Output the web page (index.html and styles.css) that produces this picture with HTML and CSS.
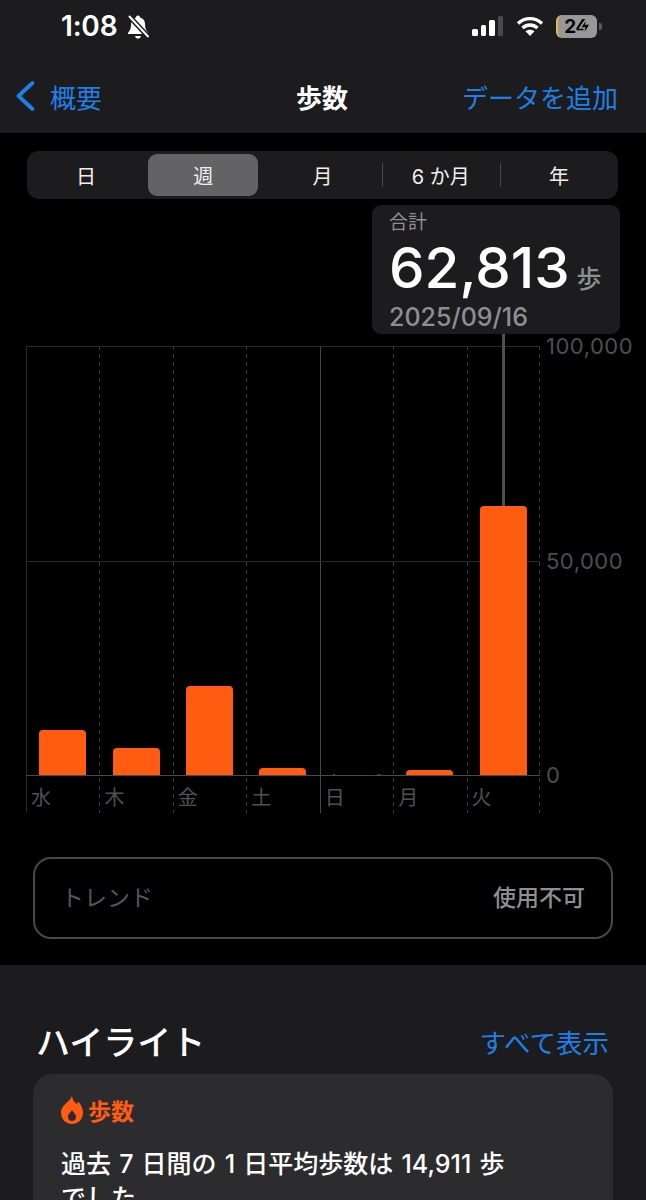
FILE: index.html
```html
<!DOCTYPE html>
<html lang="ja">
<head>
    <meta charset="UTF-8">
    <meta name="viewport" content="width=device-width, initial-scale=1.0">
    <title>歩数</title>
    <link rel="stylesheet" href="styles.css">
</head>
<body>
    <header>
        <div class="status">
            <div class="status-left">
                <span class="time">1:08</span>
                <svg class="bell" width="24" height="26" viewBox="0 0 24 26">
                    <path d="M12 1.500c1.200 0 2 .8 2.100 1.900 3.200.9 5 3.500 5 7 0 4 .8 6 3 8.300v1.300H2v-1.300c2.200-2.300 3-4.300 3-8.300 0-3.500 1.800-6.100 5-7C10 2.300 10.800 1.500 12 1.500z" fill="#fff"/>
                    <path d="M9 22h6c-.3 1.600-1.500 2.600-3 2.600S9.300 23.600 9 22z" fill="#fff"/>
                    <path d="M2.500 1.500L22.500 23" stroke="#1c1c1e" stroke-width="5"/>
                    <path d="M3 2l19.500 21" stroke="#fff" stroke-width="2"/>
                </svg>
            </div>
            <div class="status-right">
                <div class="signal">
                    <i class="sig1"></i><i class="sig2"></i><i class="sig3"></i><i class="sig4"></i>
                </div>
                <svg class="wifi" width="28" height="20" viewBox="0 0 28 20">
                    <path d="M2 7.500C9 1 19 1 26 7.500" fill="none" stroke="#fff" stroke-width="3.400"/>
                    <path d="M6.500 12c4.500-4 10.500-4 15 0" fill="none" stroke="#fff" stroke-width="3.400"/>
                    <path d="M14 20l-4.500-4.800c2.700-2 6.300-2 9 0z" fill="#fff"/>
                </svg>
                <div class="battery">
                    <span class="battery-num">24</span>
                    <svg class="battery-bolt" width="14" height="23" viewBox="0 0 14 23">
                        <path d="M9.500 2L2 13h4.500L5 21l7.500-12H8z" fill="#000" stroke="#98989a" stroke-width="1.600"/>
                    </svg>
                </div>
                <div class="battery-cap"></div>
            </div>
        </div>
        <nav class="nav">
            <a class="back">
                <svg width="22" height="32" viewBox="0 0 22 32">
                    <path d="M18.500 3L4.500 16l14 13" fill="none" stroke="#1f7fe6" stroke-width="4" stroke-linecap="round" stroke-linejoin="round"/>
                </svg>
                <span>概要</span>
            </a>
            <div class="nav-title">歩数</div>
            <a class="nav-add">データを追加</a>
        </nav>
    </header>

    <main class="chart-section">
        <div class="segments">
            <div class="seg">日</div>
            <div class="seg seg-on">週</div>
            <div class="seg">月</div>
            <div class="seg seg-line">6 か月</div>
            <div class="seg seg-line">年</div>
        </div>

        <div class="tooltip">
            <div class="tip-label">合計</div>
            <div class="tip-value">62,813<span class="tip-unit">歩</span></div>
            <div class="tip-date">2025/09/16</div>
        </div>

        <div class="chart">
            <div class="h-line h-top"></div>
            <div class="h-line h-mid"></div>
            <div class="h-line h-base"></div>
            <div class="pointer"></div>
            <div class="axis axis-top">100,000</div>
            <div class="axis axis-mid">50,000</div>
            <div class="axis axis-base">0</div>

            <div class="columns">
                <div class="col col-first"><div class="plot"><div class="bar" style="height: 10.5%"></div></div><div class="day">水</div></div>
                <div class="col"><div class="plot"><div class="bar" style="height: 6.3%"></div></div><div class="day">木</div></div>
                <div class="col"><div class="plot"><div class="bar" style="height: 20.7%"></div></div><div class="day">金</div></div>
                <div class="col"><div class="plot"><div class="bar" style="height: 1.7%"></div></div><div class="day">土</div></div>
                <div class="col col-solid"><div class="plot"><div class="specks"><i></i><i></i></div></div><div class="day">日</div></div>
                <div class="col"><div class="plot"><div class="bar" style="height: 1.1%"></div></div><div class="day">月</div></div>
                <div class="col col-last"><div class="plot"><div class="bar" style="height: 62.8%"></div></div><div class="day">火</div></div>
            </div>
        </div>

        <div class="trend">
            <span class="trend-name">トレンド</span>
            <span class="trend-state">使用不可</span>
        </div>
    </main>

    <section class="highlights">
        <div class="hl-head">
            <h2>ハイライト</h2>
            <a class="hl-all">すべて表示</a>
        </div>
        <div class="hl-card">
            <div class="hl-tag">
                <svg width="22" height="28" viewBox="0 0 22 28">
                    <path fill-rule="evenodd" d="M11 0c.5 3.500 2 5.500 4.500 8 .8-.6 1.300-1.500 1.500-2.500 3 3 5 6.500 5 11 0 6.500-4.500 11.500-11 11.500S0 23 0 16.500C0 9 8 7 11 0zM11 13.500c-.5 2.500-4 4-4 7.500 0 2.500 1.800 4 4 4s4-1.500 4-4c0-3.500-3.500-5-4-7.500z" fill="#ff5c12"/>
                </svg>
                <span>歩数</span>
            </div>
            <p class="hl-text">過去 7 日間の 1 日平均歩数は 14,911 歩でした。</p>
        </div>
    </section>
</body>
</html>
```

FILE: styles.css
```css
html, body{
    margin: 0;
    padding: 0;
    height: 1200px;
    overflow: hidden;
    background-color: black;
    font-family: Inter, "Noto Sans CJK JP", sans-serif;
    color: white;
}

/* верх */
header{
    height: 133px;
    background-color: #1c1c1e;
    border-bottom: 1px solid #161618;
    box-sizing: border-box;
}
.status{
    height: 66px;
    display: flex;
    justify-content: space-between;
    align-items: center;
    padding: 0 44px 14px 61px;
    box-sizing: border-box;
}
.status-left{
    display: flex;
    align-items: center;
    gap: 9px;
}
.time{
    font-size: 28px;
    font-weight: 600;
    letter-spacing: -0.2px;
}
.bell{
    margin-top: 1px;
}
.status-right{
    display: flex;
    align-items: center;
}
.signal{
    display: flex;
    align-items: flex-end;
    gap: 3px;
    height: 20px;
    margin-right: 13px;
}
.signal i{
    width: 5.500px;
    border-radius: 1.500px;
    background-color: white;
}
.sig1{ height: 7px; }
.sig2{ height: 11px; }
.sig3{ height: 16px; }
.signal .sig4{
    height: 20px;
    background-color: #4a4a4c;
}
.wifi{
    margin-right: 12px;
}
.battery{
    width: 41px;
    height: 23px;
    border-radius: 6px;
    border-left: 2px solid #e3b94c;
    background-color: #98989a;
    display: flex;
    justify-content: center;
    align-items: center;
    position: relative;
    color: black;
    box-sizing: border-box;
}
.battery-num{
    font-size: 19px;
    font-weight: 700;
    letter-spacing: -0.5px;
    margin-right: 3px;
}
.battery-bolt{
    position: absolute;
    right: 5px;
    top: 0;
}
.battery-cap{
    width: 3px;
    height: 7px;
    margin-left: 2px;
    border-radius: 0 2px 2px 0;
    background-color: #5c5c5e;
}
.nav{
    height: 66px;
    padding: 0 28px 6px 14px;
    box-sizing: border-box;
    display: grid;
    grid-template-columns: 1fr auto 1fr;
    align-items: center;
    font-size: 26px;
    color: #1f7fe6;
}
.back{
    display: flex;
    align-items: center;
    gap: 14px;
}
.nav-title{
    color: white;
    font-weight: 700;
    margin-left: 12px;
}
.nav-add{
    text-align: right;
}

/* график */
.chart-section{
    position: relative;
    height: 832px;
    padding-top: 18px;
    box-sizing: border-box;
}
.segments{
    margin: 0 28px 0 27px;
    height: 48px;
    padding: 3px 0;
    box-sizing: border-box;
    border-radius: 12px;
    background-color: #1c1c1e;
    display: grid;
    grid-template-columns: repeat(5, 1fr);
    font-size: 20px;
    color: #f0f0f0;
}
.seg{
    display: flex;
    justify-content: center;
    align-items: center;
    position: relative;
    border-radius: 9px;
}
.seg-on{
    background-color: #636366;
    margin: 0 5px 0 3px;
}
.seg-line::before{
    content: "";
    position: absolute;
    left: 0;
    top: 9px;
    bottom: 9px;
    width: 1px;
    background-color: #48484a;
}
.tooltip{
    position: absolute;
    z-index: 2;
    left: 372px;
    top: 72px;
    width: 248px;
    height: 129px;
    box-sizing: border-box;
    padding: 5px 0 0 17px;
    background-color: #1c1c1e;
    border-radius: 9px;
}
.tip-label{
    font-size: 19px;
    line-height: 26px;
    color: #8e8e93;
}
.tip-value{
    font-size: 56.500px;
    line-height: 60px;
    margin-top: 2px;
    font-weight: 500;
    white-space: nowrap;
}
.tip-unit{
    font-size: 25px;
    font-weight: 500;
    margin-left: 7px;
    color: #8e8e93;
}
.tip-date{
    font-size: 25px;
    line-height: 30px;
    margin-top: -7px;
    font-weight: 500;
    color: #8e8e93;
}
.chart{
    position: relative;
    margin: 147px 0 0 26px;
    width: 514px;
    height: 461px;
}
.h-line{
    position: absolute;
    left: 0;
    right: 0;
    height: 1px;
    background-color: #2a2a2c;
}
.h-top{ top: 0; }
.h-mid{ top: 215px; }
.h-base{
    top: 429px;
    background-color: #4a4a4c;
}
.pointer{
    position: absolute;
    z-index: 1;
    left: 476px;
    top: -12px;
    width: 3px;
    height: 172px;
    background-color: #505052;
}
.axis{
    position: absolute;
    left: 520px;
    font-size: 22px;
    line-height: 26px;
    letter-spacing: 0.5px;
    color: #4e4e50;
    white-space: nowrap;
}
.axis-top{ top: -13px; }
.axis-mid{ top: 202px; }
.axis-base{ top: 416px; }
.columns{
    display: grid;
    grid-template-columns: repeat(7, 1fr);
    height: 100%;
}
.col{
    display: flex;
    flex-direction: column;
    background: linear-gradient(#3c3c3e 50%, transparent 50%) left top / 1px 8px repeat-y;
}
.col-first{
    background: linear-gradient(#2a2a2c, #2a2a2c) left top / 1px 100% no-repeat;
}
.col-solid{
    background: linear-gradient(#48484a, #48484a) left top / 1px 100% no-repeat;
}
.col-last{
    background:
        linear-gradient(#3c3c3e 50%, transparent 50%) left top / 1px 8px repeat-y,
        linear-gradient(#3c3c3e 50%, transparent 50%) right top / 1px 8px repeat-y;
}
.plot{
    height: 429px;
    display: flex;
    align-items: flex-end;
    justify-content: center;
}
.bar{
    width: 47px;
    background-color: #ff5c12;
    border-radius: 4px 4px 0 0;
    position: relative;
    z-index: 1;
}
.specks{
    width: 47px;
    display: flex;
    justify-content: space-between;
    position: relative;
    z-index: 1;
}
.specks i{
    width: 2px;
    height: 1px;
    background-color: #a83c10;
}
.day{
    font-size: 20px;
    line-height: 30px;
    margin-top: 8px;
    padding-left: 5px;
    color: #515153;
}
.trend{
    margin: 50px 33px 0 33px;
    height: 82px;
    box-sizing: border-box;
    border: 2px solid #48484a;
    border-radius: 18px;
    display: flex;
    justify-content: space-between;
    align-items: center;
    padding: 0 26px 5px;
    font-size: 23px;
}
.trend-name{
    color: #55555a;
}
.trend-state{
    color: #8e8e93;
    font-weight: 500;
}

/* ハイライト */
.highlights{
    height: 235px;
    overflow: hidden;
    background-color: #1c1c1e;
    padding: 50px 33px 0 33px;
    box-sizing: border-box;
}
.hl-head{
    display: flex;
    justify-content: space-between;
    align-items: center;
    height: 50px;
    padding: 0 4px 0 3px;
}
h2{
    margin: 0;
    font-size: 34px;
    font-weight: 500;
}
.hl-all{
    font-size: 26.500px;
    margin-top: 3px;
    color: #1f7fe6;
}
.hl-card{
    margin-top: 9px;
    height: 300px;
    padding: 19px 28px;
    box-sizing: border-box;
    background-color: #2c2c2e;
    border-radius: 20px;
}
.hl-tag{
    display: flex;
    align-items: center;
    gap: 5px;
    font-size: 23px;
    font-weight: 700;
    color: #ff5c12;
}
.hl-text{
    margin: 20px 0 0;
    font-size: 25px;
    line-height: 34px;
    font-weight: 500;
    word-spacing: 1.500px;
    width: 450px;
}
```
